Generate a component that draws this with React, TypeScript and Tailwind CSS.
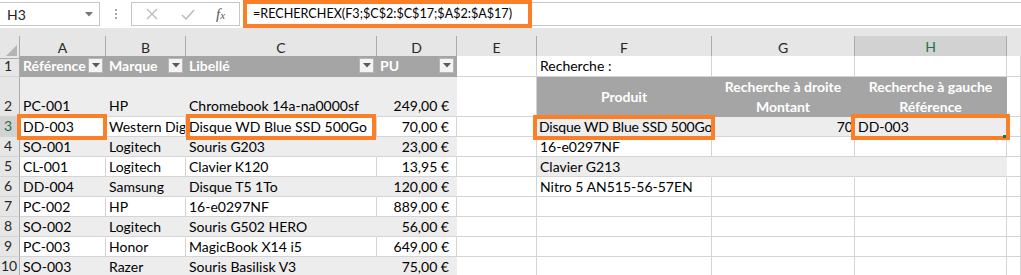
import React from 'react';

// grille Excel : en-tête de ligne + colonnes A..I
const GRID = 'grid grid-cols-[20px_86px_80px_191px_80px_80px_175px_143px_152px_1fr]';
const FONT = "font-['Lato','Liberation_Sans',sans-serif]";

type Kind = 'w' | 'g' | 'h';

interface CellProps {
  kind?: Kind;
  right?: boolean;
  center?: boolean;
  bottom?: boolean;
  tight?: boolean;
  children?: React.ReactNode;
}

const Cell: React.FC<CellProps> = ({ kind = 'w', right, center, bottom, tight, children }) => {
  const base =
    kind === 'h'
      ? 'bg-[#a5a5a5] border-r border-b border-[#a5a5a5] text-white font-bold'
      : kind === 'g'
      ? 'bg-[#ededed] border-r border-r-[#ededed] border-b border-b-[#d4d4d4] text-black'
      : 'bg-white border-r border-b border-[#d4d4d4] text-black';
  return (
    <div
      className={[
        'relative flex overflow-hidden whitespace-nowrap text-[14px] leading-[18px]',
        tight ? 'pl-[2px] pr-0 tracking-[-0.2px]' : 'px-[3px]',
        base,
        bottom ? 'items-end pb-[1px]' : 'items-center',
        right ? 'justify-end pr-[7px]' : '',
        center ? 'justify-center text-center' : '',
      ].join(' ')}
    >
      {children}
    </div>
  );
};

const FilterBtn = () => (
  <span className="absolute right-[2px] top-[2px] flex h-[15px] w-[15px] items-center justify-center border border-[#b8b8b8] bg-[#f4f4f4]">
    <svg width="8" height="5" viewBox="0 0 8 5">
      <path d="M0 0 L8 0 L4 4.5 Z" fill="#5a5a5a" />
    </svg>
  </span>
);

const RowHead: React.FC<{ n: number; active?: boolean }> = ({ n, active }) => (
  <div
    className={[
      'flex items-end pb-[1px] text-[14px] leading-[18px] border-b border-[#d4d4d4]',
      n >= 10 ? 'pl-[1px]' : 'pl-[4px]',
      active
        ? 'bg-[#d2d2d2] text-[#217346] border-r-2 border-r-[#217346]'
        : 'bg-[#e6e6e6] text-[#262626] border-r border-r-[#ababab]',
    ].join(' ')}
  >
    {n}
  </div>
);

const data: [string, string, string, string][] = [
  ['SO-001', 'Logitech', 'Souris G203', '23,00 €'],
  ['CL-001', 'Logitech', 'Clavier K120', '13,95 €'],
  ['DD-004', 'Samsung', 'Disque T5 1To', '120,00 €'],
  ['PC-002', 'HP', '16-e0297NF', '889,00 €'],
  ['SO-002', 'Logitech', 'Souris G502 HERO', '56,00 €'],
  ['PC-003', 'Honor', 'MagicBook X14 i5', '649,00 €'],
  ['SO-003', 'Razer', 'Souris Basilisk V3', '75,00 €'],
];

const produits: Record<number, string> = {
  4: '16-e0297NF',
  5: 'Clavier G213',
  6: 'Nitro 5 AN515-56-57EN',
};

const Orange: React.FC<{ cls: string }> = ({ cls }) => (
  <div className={'pointer-events-none absolute border-4 border-[#fb7f27] ' + cls} />
);

export default function App() {
  return (
    <div className={'relative h-[275px] w-[1021px] overflow-hidden bg-white ' + FONT}>
      {/* barre de formule */}
      <div className="flex h-[28px] items-center bg-white">
        <div className="flex h-[24px] w-[100px] items-center justify-between border border-l-0 border-[#c6c6c6] bg-white pl-[7px] pr-[6px] text-[14px] text-[#222]">
          <span>H3</span>
          <svg width="8" height="5" viewBox="0 0 8 5">
            <path d="M0 0 L8 0 L4 4.5 Z" fill="#777" />
          </svg>
        </div>
        <div className="flex w-[31px] flex-col items-center gap-[2px]">
          <span className="h-[2px] w-[2px] bg-[#a6a6a6]" />
          <span className="h-[2px] w-[2px] bg-[#a6a6a6]" />
          <span className="h-[2px] w-[2px] bg-[#a6a6a6]" />
        </div>
        <div className="flex h-[24px] w-[109px] items-center border border-[#c6c6c6] bg-white">
          <svg className="ml-[14px]" width="12" height="12" viewBox="0 0 12 12">
            <path d="M1 1 L11 11 M11 1 L1 11" stroke="#bdbdbd" strokeWidth="1.4" />
          </svg>
          <svg className="ml-[23px]" width="14" height="11" viewBox="0 0 14 11">
            <path d="M1 6 L5 10 L13 1" stroke="#bdbdbd" strokeWidth="1.6" fill="none" />
          </svg>
          <span className="ml-[21px] font-['Liberation_Serif',serif] text-[15px] italic text-[#555]">
            f<span className="text-[11px]">x</span>
          </span>
        </div>
        <div className="ml-[3px] flex h-[28px] w-[289px] items-center border-4 border-[#fb7f27] bg-white pl-[6px] text-[12.6px] text-black">
          =RECHERCHEX(F3;$C$2:$C$17;$A$2:$A$17)
        </div>
        <div className="h-[24px] flex-1 border-y border-[#c6c6c6] bg-white" />
      </div>
      <div className="h-[8px] bg-[#e6e6e6]" />

      {/* en-têtes de colonnes */}
      <div className={GRID + ' h-[20px] bg-[#e6e6e6] text-[14px] text-[#262626]'}>
        <div className="relative border-r border-b border-[#ababab]">
          <svg className="absolute bottom-[2px] right-[2px]" width="11" height="11" viewBox="0 0 11 11">
            <path d="M11 0 L11 11 L0 11 Z" fill="#b4b4b4" />
          </svg>
        </div>
        {['A', 'B', 'C', 'D', 'E', 'F', 'G'].map((c) => (
          <div key={c} className="flex items-center justify-center border-r border-b border-[#ababab]">
            {c}
          </div>
        ))}
        <div className="flex items-center justify-center border-r border-[#ababab] border-b-2 border-b-[#217346] bg-[#d2d2d2] text-[#217346]">
          H
        </div>
        <div className="border-b border-[#ababab]" />
      </div>

      {/* ligne 1 */}
      <div className={GRID + ' h-[21px]'}>
        <RowHead n={1} />
        <Cell kind="h">Référence<FilterBtn /></Cell>
        <Cell kind="h">Marque<FilterBtn /></Cell>
        <Cell kind="h">Libellé<FilterBtn /></Cell>
        <Cell kind="h">PU<FilterBtn /></Cell>
        <Cell />
        <Cell>Recherche :</Cell>
        <Cell />
        <Cell />
        <Cell />
      </div>

      {/* ligne 2 */}
      <div className={GRID + ' h-[40px]'}>
        <RowHead n={2} />
        <Cell kind="g" bottom>PC-001</Cell>
        <Cell kind="g" bottom>HP</Cell>
        <Cell kind="g" bottom>Chromebook 14a-na0000sf</Cell>
        <Cell kind="g" bottom right>249,00 €</Cell>
        <Cell />
        <Cell kind="h" center>Produit</Cell>
        <Cell kind="h" center>
          <span className="leading-[20px]">Recherche à droite<br />Montant</span>
        </Cell>
        <Cell kind="h" center>
          <span className="leading-[20px]">Recherche à gauche<br />Référence</span>
        </Cell>
        <Cell />
      </div>

      {/* ligne 3 */}
      <div className={GRID + ' h-[20px]'}>
        <RowHead n={3} active />
        <Cell>DD-003</Cell>
        <Cell>Western Digital</Cell>
        <Cell>Disque WD Blue SSD 500Go</Cell>
        <Cell right>70,00 €</Cell>
        <Cell />
        <Cell kind="g" tight>Disque WD Blue SSD 500Go</Cell>
        <Cell kind="g" right>
          <span className="-mr-[6px]">70</span>
        </Cell>
        <Cell kind="g">DD-003</Cell>
        <Cell />
      </div>

      {/* lignes 4 à 10 */}
      {data.map((r, i) => {
        const n = i + 4;
        const k: Kind = n % 2 === 0 ? 'g' : 'w';
        const fk: Kind = n === 5 ? 'g' : 'w';
        return (
          <div key={n} className={GRID + ' h-[20px]'}>
            <RowHead n={n} />
            <Cell kind={k}>{r[0]}</Cell>
            <Cell kind={k}>{r[1]}</Cell>
            <Cell kind={k}>{r[2]}</Cell>
            <Cell kind={k} right>{r[3]}</Cell>
            <Cell />
            <Cell kind={fk}>{produits[n]}</Cell>
            <Cell kind={fk} />
            <Cell kind={fk} />
            <Cell />
          </div>
        );
      })}

      {/* cadres orange */}
      <Orange cls="left-[17px] top-[114px] h-[26px] w-[90px]" />
      <Orange cls="left-[186px] top-[114px] h-[26px] w-[190px]" />
      <Orange cls="left-[533px] top-[115px] h-[25px] w-[182px]" />
      <Orange cls="left-[851px] top-[114px] h-[26px] w-[159px]" />
      <div className="absolute left-[1003px] top-[135px] h-[3px] w-[3px] bg-[#217346]" />
    </div>
  );
}
